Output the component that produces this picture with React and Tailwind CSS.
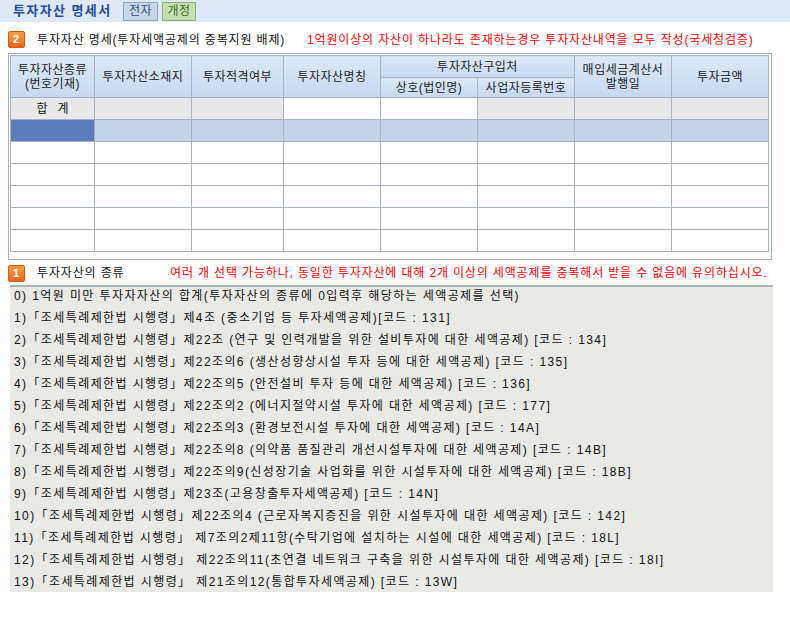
import React from "react";

const font = "font-['Liberation_Sans','Noto_Sans_CJK_KR',sans-serif]";

const items = [
  "0) 1억원 미만 투자자자산의 합계(투자자산의 종류에 0입력후 해당하는 세액공제를 선택)",
  "1)「조세특례제한법 시행령」제4조 (중소기업 등 투자세액공제)[코드 : 131]",
  "2)「조세특례제한법 시행령」제22조 (연구 및 인력개발을 위한 설비투자에 대한 세액공제) [코드 : 134]",
  "3)「조세특례제한법 시행령」제22조의6 (생산성향상시설 투자 등에 대한 세액공제) [코드 : 135]",
  "4)「조세특례제한법 시행령」제22조의5 (안전설비 투자 등에 대한 세액공제) [코드 : 136]",
  "5)「조세특례제한법 시행령」제22조의2 (에너지절약시설 투자에 대한 세액공제) [코드 : 177]",
  "6)「조세특례제한법 시행령」제22조의3 (환경보전시설 투자에 대한 세액공제) [코드 : 14A]",
  "7)「조세특례제한법 시행령」제22조의8 (의약품 품질관리 개선시설투자에 대한 세액공제) [코드 : 14B]",
  "8)「조세특례제한법 시행령」제22조의9(신성장기술 사업화를 위한 시설투자에 대한 세액공제) [코드 : 18B]",
  "9)「조세특례제한법 시행령」제23조(고용창출투자세액공제) [코드 : 14N]",
  "10)「조세특례제한법 시행령」제22조의4 (근로자복지증진을 위한 시설투자에 대한 세액공제) [코드 : 142]",
  "11)「조세특례제한법 시행령」 제7조의2제11항(수탁기업에 설치하는 시설에 대한 세액공제) [코드 : 18L]",
  "12)「조세특례제한법 시행령」 제22조의11(초연결 네트워크 구축을 위한 시설투자에 대한 세액공제) [코드 : 18I]",
  "13)「조세특례제한법 시행령」 제21조의12(통합투자세액공제) [코드 : 13W]",
];

const widths = ["w-[84px]", "w-[97px]", "w-[92px]", "w-[97px]", "w-[97px]", "w-[97px]", "w-[97px]", "w-[97px]"];

function Badge({ n }) {
  return (
    <span className="flex h-[17px] w-[17px] items-center justify-center rounded-[2px] border border-[#d55a12] bg-gradient-to-b from-[#f9a04a] to-[#e8661a] text-[11px] font-bold leading-none text-white">
      {n}
    </span>
  );
}

const th = "border border-[#a9b1c4] bg-gradient-to-b from-[#dde8f8] to-[#c6d8f1] text-center font-normal text-[#222] leading-[14px] tracking-[0.5px]";
const td = "border border-[#a9b1c4] h-[22px]";

export default function App() {
  return (
    <div className={`${font} w-[790px] h-[639px] bg-white text-[12px] text-[#111]`}>
      <div className="flex h-[22px] items-center bg-[#dfe8f6] pl-[13px]">
        <span className="w-[110px] text-[13px] font-bold tracking-[1.4px] text-[#1d4f9e]">투자자산 명세서</span>
        <span className="flex h-[19px] w-[35px] items-center justify-center border border-[#8ca3c2] bg-[#c9d7ea] text-[12px] tracking-[0.5px] text-[#2c4d7c]">
          전자
        </span>
        <span className="ml-[4px] flex h-[19px] w-[34px] items-center justify-center border border-[#8db071] bg-[#c4e0ae] text-[12px] tracking-[0.5px] text-[#3d6b2a]">
          개정
        </span>
      </div>

      <div className="mt-[9px] flex h-[17px] items-center pl-[8px] tracking-[0.85px]">
        <Badge n="2" />
        <span className="ml-[12px] w-[270px]">투자자산 명세(투자세액공제의 중복지원 배제)</span>
        <span className="text-[#ff0000]">1억원이상의 자산이 하나라도 존재하는경우 투자자산내역을 모두 작성(국세청검증)</span>
      </div>

      <div className="ml-[8px] mt-[5px] h-[207px] w-[764px] border border-[#a9b1c4] pl-[1px] pt-[1px]">
        <table className="table-fixed border-collapse">
          <thead>
            <tr className="h-[22px]">
              <th rowSpan={2} className={`${th} ${widths[0]}`}>
                투자자산종류
                <br />
                (번호기재)
              </th>
              <th rowSpan={2} className={`${th} ${widths[1]}`}>투자자산소재지</th>
              <th rowSpan={2} className={`${th} ${widths[2]}`}>투자적격여부</th>
              <th rowSpan={2} className={`${th} ${widths[3]}`}>투자자산명칭</th>
              <th colSpan={2} className={th}>투자자산구입처</th>
              <th rowSpan={2} className={`${th} ${widths[6]}`}>
                매입세금계산서
                <br />
                발행일
              </th>
              <th rowSpan={2} className={`${th} ${widths[7]}`}>투자금액</th>
            </tr>
            <tr className="h-[20px]">
              <th className={`${th} ${widths[4]}`}>상호(법인명)</th>
              <th className={`${th} ${widths[5]}`}>사업자등록번호</th>
            </tr>
          </thead>
          <tbody>
            <tr>
              <td className={`${td} bg-[#e8e8e8] text-center`}>합&nbsp;&nbsp;&nbsp;계</td>
              <td className={`${td} bg-[#e8e8e8]`} />
              <td className={`${td} bg-[#e8e8e8]`} />
              <td className={`${td} bg-white`} />
              <td className={`${td} bg-white`} />
              <td className={`${td} bg-[#e8e8e8]`} />
              <td className={`${td} bg-[#e8e8e8]`} />
              <td className={`${td} bg-[#e8e8e8]`} />
            </tr>
            <tr>
              <td className={`${td} bg-[#5d7cba]`} />
              {[1, 2, 3, 4, 5, 6, 7].map((i) => (
                <td key={i} className={`${td} bg-[#c5d1e8]`} />
              ))}
            </tr>
            {[0, 1, 2, 3, 4].map((r) => (
              <tr key={r}>
                {[0, 1, 2, 3, 4, 5, 6, 7].map((i) => (
                  <td key={i} className={td} />
                ))}
              </tr>
            ))}
          </tbody>
        </table>
      </div>

      <div className="mt-[4px] flex h-[18px] items-center pl-[8px] tracking-[0.85px]">
        <Badge n="1" />
        <span className="ml-[12px] w-[133px]">투자자산의 종류</span>
        <span className="text-[#ff0000]">
          여러 개 선택 가능하나, 동일한 투자자산에 대해 2개 이상의 세액공제를 중복해서 받을 수 없음에 유의하십시오.
        </span>
      </div>

      <div className="ml-[10px] mt-[3px] h-[307px] w-[763px] overflow-hidden border-t-2 border-[#a9b1c4] bg-[#e9e9e5] pl-[4px] tracking-[1.4px]">
        {items.map((t) => (
          <div key={t} className="h-[22px] leading-[18px] whitespace-nowrap">
            {t}
          </div>
        ))}
      </div>
    </div>
  );
}
